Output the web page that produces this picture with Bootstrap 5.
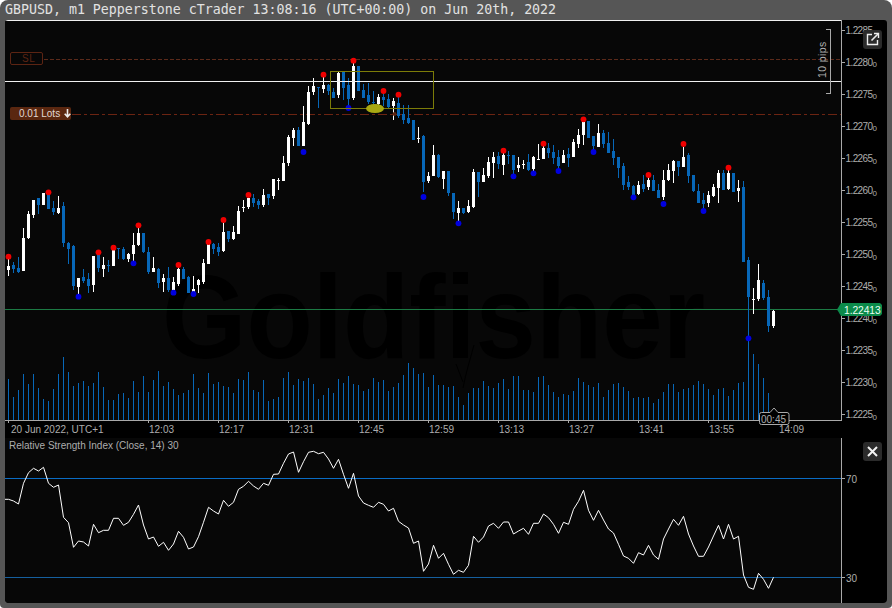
<!DOCTYPE html>
<html lang="en">

<head>
    <meta charset="UTF-8">
    <meta name="viewport" content="width=device-width, initial-scale=1">
    <title>GBPUSD m1 chart</title>
    <link href="https://cdn.jsdelivr.net/npm/bootstrap@5.3.0/dist/css/bootstrap.min.css" rel="stylesheet">
    <style>
        html, body { height: 100%; background: #fff; overflow: hidden; }

        .chart-frame {
            height: 608px;
            background: #565656;
            border-radius: 8px 8px 4px 4px;
            padding: 0 5px 5px;
        }

        .title-strip {
            height: 20px;
            font: 13.28px/20px "DejaVu Sans Mono", monospace;
            color: #e2e2e2;
            white-space: nowrap;
        }

        .chart-stack { background: #000; border-radius: 3px 3px 4px 4px; overflow: hidden; }
        .pane-main { height: 417px; }
        .pane-rsi { height: 166px; }
        .pane-main svg, .pane-rsi svg { display: block; }

        svg text { font-family: "Liberation Sans", Arial, sans-serif; font-size: 10px; fill: #adadad; }
        svg .price-text { letter-spacing: -.6px; }
        svg .price-sub { font-size: 8px; }
        svg .chip-text { fill: #eafff2; font-size: 10.3px; letter-spacing: -.1px; }
        svg .mark-text { font-size: 118px; font-weight: 700; fill: #000; }

        .pane-btn {
            width: 19px;
            height: 19px;
            padding: 0;
            right: 5px;
            background: #2b2b2b;
            border: 0;
            border-radius: 3px;
            line-height: 0;
        }

        .pane-btn-expand { top: 10px; }
        .pane-btn-close { top: 5px; }

        .order-chip {
            left: 5px;
            height: 13px;
            font: 10px/13px "Liberation Sans", Arial, sans-serif;
            border-radius: 2px;
        }

        .order-chip-sl {
            top: 32px;
            width: 33px;
            border: 1px solid #5c2413;
            color: #5c2413;
            padding-left: 11px;
            line-height: 11px;
            letter-spacing: .5px;
        }

        .chip-grip {
            left: 2px;
            top: 2px;
            width: 3px;
            height: 7px;
            background: radial-gradient(circle, #5c2413 .6px, transparent .7px) 0 0 / 2px 2px;
        }

        .order-chip-lots {
            top: 87px;
            width: 61px;
            background: #5a2710;
            color: #e2d8d2;
            padding-left: 9px;
        }

        .chip-arrow { margin-left: 1px; vertical-align: -1px; }
    </style>
</head>

<body>
    <div class="chart-frame d-flex flex-column">
        <div class="title-strip">GBPUSD, m1 Pepperstone cTrader 13:08:16 (UTC+00:00) on Jun 20th, 2022</div>
        <div class="chart-stack d-flex flex-column">
            <div class="pane-main position-relative">
                <svg id="mainChart" width="882" height="417" viewBox="5 20 882 417"></svg>
                <div class="order-chip order-chip-sl position-absolute"><span class="chip-grip position-absolute"></span>SL</div>
                <div class="order-chip order-chip-lots position-absolute">0.01 Lots
                    <svg class="chip-arrow d-inline" width="7" height="9" viewBox="0 0 7 9" fill="none" stroke="#eee" stroke-width="1.6">
                        <path d="M3.500 0v8M.7 4.800l2.800 3 2.800-3" />
                    </svg>
                </div>
                <button type="button" class="btn pane-btn pane-btn-expand position-absolute" aria-label="Expand">
                    <svg width="19" height="19" viewBox="0 0 19 19" fill="none" stroke="#eee" stroke-width="1.4">
                        <path d="M9 4.500H4.500v10h10V10" />
                        <path d="M8.500 10.500L15 4" stroke-width="1.6" />
                        <path d="M11 3.500h4.500V8" />
                    </svg>
                </button>
            </div>
            <div class="pane-rsi position-relative">
                <svg id="rsiChart" width="882" height="166" viewBox="5 437 882 166"></svg>
                <button type="button" class="btn pane-btn pane-btn-close position-absolute" aria-label="Close">
                    <svg width="19" height="19" viewBox="0 0 19 19" fill="none" stroke="#f2f2f2" stroke-width="2">
                        <path d="M5 5l9 9M14 5l-9 9" />
                    </svg>
                </button>
            </div>
        </div>
    </div>

    <script>
        // All series below were read off the picture at 3x, so y = offset + value / 3.
        // Candle: [colour, bodyTop, bodyBottom, wickTop, wickBottom, dotColour, dotY]
        var candleGroups = [
            [170, [
                ["w",288,300,265,318,"r",260],["b",285,297,276,308],["b",294,306,261,309],["w",204,303,174,303],["w",132,204,123,207],
                ["w",90,135,90,144],["b",84,105,84,132],["w",69,105,69,105],["b",72,117,72,117,"r",67],["b",114,126,93,135],
                ["w",114,129,78,132],["b",108,219,96,231],["b",219,237,216,282],["b",228,348,225,360],["w",324,351,324,375,"u",380],
                ["b",321,333,297,339],["b",327,348,309,369],["w",258,345,258,366],["b",255,294,252,306,"r",247],["w",285,297,261,321],
                ["b",285,288,270,306],["w",240,288,237,288,"r",233],["b",235,238,234,267],["b",237,267,231,270],["w",252,267,249,276],
                ["w",225,252,189,273,"u",280],["w",189,225,159,228,"r",166],["b",189,246,189,249],["b",246,306,231,312],["w",294,306,261,306],
                ["b",297,339,294,354],["w",324,336,312,366],["b",324,360,291,366],["w",336,360,321,365,"u",368],["w",297,342,291,348,"r",285],
                ["b",297,327,291,327],["b",321,369,318,369],["w",357,369,318,369,"u",372],["w",330,345,327,369],["w",279,336,267,342],
                ["w",222,282,222,282,"r",216],["b",222,237,219,252],["b",231,246,219,258],["w",186,243,156,246,"r",150],["b",183,207,183,216],
                ["w",186,207,168,210],["w",123,192,108,192],["w",111,114,90,126],["w",84,111,81,117,"r",75],["b",84,99,72,111],
                ["b",93,105,87,117],["w",75,105,57,111],["b",72,84,72,105]
            ]],
            [120, [
                ["w",177,229,177,237],["w",180,183,174,210],["w",129,183,108,183],["w",51,129,45,138],["w",30,54,24,78],["b",30,78,21,78]
            ]],
            [40, [
                ["w",246,318,198,318,"u",336],["w",156,252,138,255],["w",138,156,114,165],["b",141,144,141,204],["w",135,147,111,159,"r",104],
                ["b",135,153,132,165],["b",156,174,144,174],["w",99,165,96,174],["b",96,144,93,180],["b",135,177,114,204,"u",204],
                ["w",78,174,69,180,"r",62],["b",78,153,78,153],["b",150,174,132,174],["b",165,186,129,192],["b",186,189,153,201],
                ["w",171,192,162,204],["b",171,180,158,198,"r",153],["b",177,201,162,204],["w",183,198,174,240],["b",189,228,171,234,"r",164],
                ["b",222,240,195,252],["b",234,249,195,252],["b",240,300,240,300],["w",294,297,261,309],["b",288,426,285,456,"u",471],
                ["w",408,423,396,429],["w",345,408,315,408],["b",345,411,342,414],["w",393,417,393,447],["b",393,459,393,468]
            ]],
            [110, [
                ["b",249,306,249,327],["w",294,309,273,333,"u",340],["b",294,309,294,312],["w",288,306,270,309],["w",186,291,177,294],
                ["b",186,216,186,261],["w",195,216,174,216],["w",156,198,141,204],["w",141,159,126,204],["b",138,162,126,177],
                ["w",135,165,129,195,"r",122],["b",135,138,123,162],["b",135,180,135,192,"u",199],["w",165,174,141,186],["w",162,165,150,177],
                ["b",156,180,132,183],["w",141,177,138,183,"u",190],["w",146,149,102,150],["w",114,147,108,147,"r",101],["b",114,129,99,144],
                ["b",126,144,105,162],["b",141,168,120,177,"u",183],["w",135,159,120,159],["b",132,144,114,171],["w",96,141,87,141],
                ["w",75,102,57,114],["w",33,75,33,105,"r",28],["b",33,84,33,84],["b",78,108,78,120,"u",126],["w",69,111,42,111],
                ["b",69,102,60,114],["b",99,129,66,129],["b",123,144,87,165],["b",141,174,141,204],["b",168,225,159,240],
                ["b",216,231,198,240],["b",228,255,225,258,"u",262],["w",225,252,213,255],["b",222,237,195,246],["w",210,231,198,240,"r",195],
                ["b",210,243,195,243],["b",240,264,222,264],["w",210,261,180,270,"u",282],["w",180,210,162,213],["w",153,183,150,219],
                ["b",153,171,153,198],["w",141,171,111,171,"r",102],["b",135,198,129,219],["b",195,243,195,246],["b",243,279,222,279],
                ["b",270,282,249,300,"u",303],["w",255,279,243,291],["w",231,258,222,261],["w",189,234,180,279],["b",189,240,180,240],
                ["w",189,237,180,240,"r",173],["b",189,246,189,246],["w",234,243,210,276]
            ]],
            [120, [
                ["b",201,426,183,426],["b",420,531,411,655,"u",655],["w",537,540,504,582],["w",480,537,432,543],["b",489,534,480,540],
                ["b",531,618,510,636],["w",573,618,570,624]
            ]]
        ];

        var volumeGroups = [
            [340, [117,171,150,102,132,102,144,177,183,147,102,51,96,138,129,123,138,129,96,141,180,180,162,159,174,123,156,108,156,120,93,138,126,147,165,159,150,102,144,159,99,132,126,138,141,159,117,120,96,150,156,120,183]],
            [120, [837,831,774,756,795,777,783,774,792,837,825,804,819,777,789,768,792,795,813,807,774,786,780,813,801,789,765,729,744,762,759,801,765,795,795,801,798,831,855,819,804,804,783,798,804,789,777,807,768,768,810,809,816,771,768,795,816,831,822,825,813,774,786,795,801,789,831,810,792,789,801,813,834,831,834,831,849,837,816,792,792,816,807,804,795,783,792,807,825,807,804,828,810,789,786,655,702,732,774,819]]
        ];

        var rsiGroups = [
            [450, [148,153,162,100,68,55,63,52,100,112,105,202,218,292,273,276,288,223,248,241,241,205,205,226,217,193,165,225,267,261,289,277,301,282,244,262,297,291,260,217,172,183,192,151,169,157,118,109,94,108,118,100,106,73,72,40,12,6,67,35,7]],
            [430, [64,71,67,87,115,88,133,175,130,198,219,226,232,217,223,243,235,274,285,294,340,333,424,402,346,385,370,403,433,421,427,406,319,337,321,288,280,295,276,276,312,303,295,313,280,280,252,263,283,310,277,283,238,214,181,241]],
            [430, [271,241,270,297,309,343,378,385,400,368,375,346,375,388,327,297,268,286,259,312,348,379,379,351,318,286,327,283,327,319,435,472,478,430,448,475,442]]
        ];

        var BLUE = "#0767b8", WHITE = "#ffffff", AXIS = "#a9a9a9";

        function barX(k) { return 8 + 5 * k; }

        function rect(x, y, w, h, fill) {
            return '<rect x="' + x + '" y="' + y + '" width="' + w + '" height="' + h + '" fill="' + fill + '" shape-rendering="crispEdges"/>';
        }

        function line(x1, y1, x2, y2, stroke, extra) {
            return '<line x1="' + x1 + '" y1="' + y1 + '" x2="' + x2 + '" y2="' + y2 + '" stroke="' + stroke + '" shape-rendering="crispEdges" ' + (extra || "") + '/>';
        }

        function label(x, y, text, cls) {
            return '<text x="' + x + '" y="' + y + '"' + (cls ? ' class="' + cls + '"' : "") + '>' + text + '</text>';
        }

        function drawMain() {
            var out = "";
            out += rect(5, 20, 836, 400, "#070707");

            // Watermark and its small fish tail behind everything
            out += '<text x="162" y="358" class="mark-text" textLength="543" lengthAdjust="spacingAndGlyphs">Goldfisher</text>';
            out += '<path d="M474 345C470 360 466 372 463 388M456 364L463 382" fill="none" stroke="#000" stroke-width="1"/>';

            // Volume bars
            var k = 0;
            volumeGroups.forEach(function (group) {
                group[1].forEach(function (z) {
                    var top = Math.round(group[0] + z / 3);
                    out += rect(barX(k), top, 1, 420 - top, BLUE);
                    k++;
                });
            });

            // Order and price lines
            out += line(44, 59.5, 841, 59.5, "#5c2a1a", 'stroke-dasharray="4 2"');
            out += line(72, 114.5, 841, 114.5, "#6c2412", 'stroke-dasharray="9 3 3 3"');
            out += line(5, 309.5, 841, 309.5, "#1c7a44");

            // Candles
            var dots = "";
            k = 0;
            candleGroups.forEach(function (group) {
                var off = group[0];
                group[1].forEach(function (c) {
                    var x = barX(k), fill = c[0] === "w" ? WHITE : BLUE;
                    var bodyTop = Math.round(off + c[1] / 3), bodyBot = Math.round(off + c[2] / 3);
                    var wickTop = Math.round(off + c[3] / 3), wickBot = Math.round(off + c[4] / 3);
                    out += rect(x, wickTop, 1, Math.max(wickBot - wickTop, 1), fill);
                    out += rect(x - 1, bodyTop, 3, Math.max(bodyBot - bodyTop, 1), fill);
                    if (c[5]) {
                        dots += '<circle cx="' + (x + .5) + '" cy="' + (off + c[6] / 3).toFixed(1) + '" r="2.9" fill="' + (c[5] === "r" ? "#f00000" : "#0000e0") + '"/>';
                    }
                    k++;
                });
            });
            out += dots;

            // Drawn objects on top of the candles
            out += line(5, 81.5, 841, 81.5, "#f0f0f0");
            out += '<rect x="330.5" y="71.5" width="103" height="37" fill="none" stroke="#7c7c08" shape-rendering="crispEdges"/>';
            out += '<ellipse cx="375" cy="108.5" rx="9" ry="4.5" fill="#a8a812"/>';
            out += '<circle cx="394.5" cy="114" r="2" fill="#5c2412"/>';

            // 10 pips bracket
            out += '<path d="M826 29.5h4.5v63.5H826" fill="none" stroke="' + AXIS + '" shape-rendering="crispEdges"/>';
            out += '<text transform="translate(826 78) rotate(-90)" style="font-size:10.5px;letter-spacing:.4px">10 pips</text>';

            // Axes
            out += rect(5, 20, 836, 1, "#f0f0f0");
            out += rect(841, 20, 1, 401, AXIS);
            out += rect(5, 420, 836, 1, AXIS);
            out += rect(5, 437, 882, 1, AXIS);

            for (var i = 0; i < 13; i++) {
                var y = 29.8 + 32.04 * i;
                var price = (1.2285 - i * 0.0005).toFixed(4);
                out += rect(842, Math.round(y), 3, 1, AXIS);
                out += '<text x="845.5" y="' + (y + 4).toFixed(1) + '" class="price-text">' + price + '<tspan class="price-sub" dy="1.5">0</tspan></text>';
            }

            // Time axis
            out += rect(8, 420, 1, 3, AXIS);
            out += label(11, 433, "20 Jun 2022, UTC+1");
            var times = ["12:03", "12:17", "12:31", "12:45", "12:59", "13:13", "13:27", "13:41", "13:55", "14:09"];
            times.forEach(function (t, i) {
                var x = 148 + 70 * i;
                out += rect(x, 420, 1, 3, AXIS);
                out += label(x + 1, 433, t);
            });

            // Countdown flag under the last bar
            out += '<path d="M759.5 414.5a2 2 0 0 1 2-2H770l4-4.5 4 4.5h9a2 2 0 0 1 2 2v8a2 2 0 0 1-2 2h-25.5a2 2 0 0 1-2-2z" fill="#000" stroke="' + AXIS + '"/>';
            out += label(761, 422.5, "00:45");

            // Live price tag
            out += '<path d="M837 309.5L841 303h39l2 2v9l-2 2h-39z" fill="#0b8a4a"/>';
            out += label(844, 313.5, "1.22413", "chip-text");

            document.getElementById("mainChart").innerHTML = out;
        }

        function drawRsi() {
            var out = "";
            out += rect(5, 438, 836, 166, "#070707");
            out += label(9, 449, "Relative Strength Index (Close, 14) 30");

            out += line(5, 478.5, 841, 478.5, "#0a6cc4");
            out += line(5, 577.5, 841, 577.5, "#155f9e");

            var pts = ["5,499.3"], k = 0;
            rsiGroups.forEach(function (group) {
                group[1].forEach(function (z) {
                    pts.push((barX(k) + .5) + "," + (group[0] + z / 3).toFixed(1));
                    k++;
                });
            });
            out += '<polyline points="' + pts.join(" ") + '" fill="none" stroke="#fff" stroke-width="1"/>';

            out += rect(841, 438, 1, 165, AXIS);
            out += rect(842, 478, 3, 1, AXIS);
            out += rect(842, 577, 3, 1, AXIS);
            out += label(846, 483, "70");
            out += label(846, 582, "30");

            document.getElementById("rsiChart").innerHTML = out;
        }

        drawMain();
        drawRsi();
    </script>

    <script src="https://cdn.jsdelivr.net/npm/bootstrap@5.3.0/dist/js/bootstrap.bundle.min.js"></script>
</body>

</html>
